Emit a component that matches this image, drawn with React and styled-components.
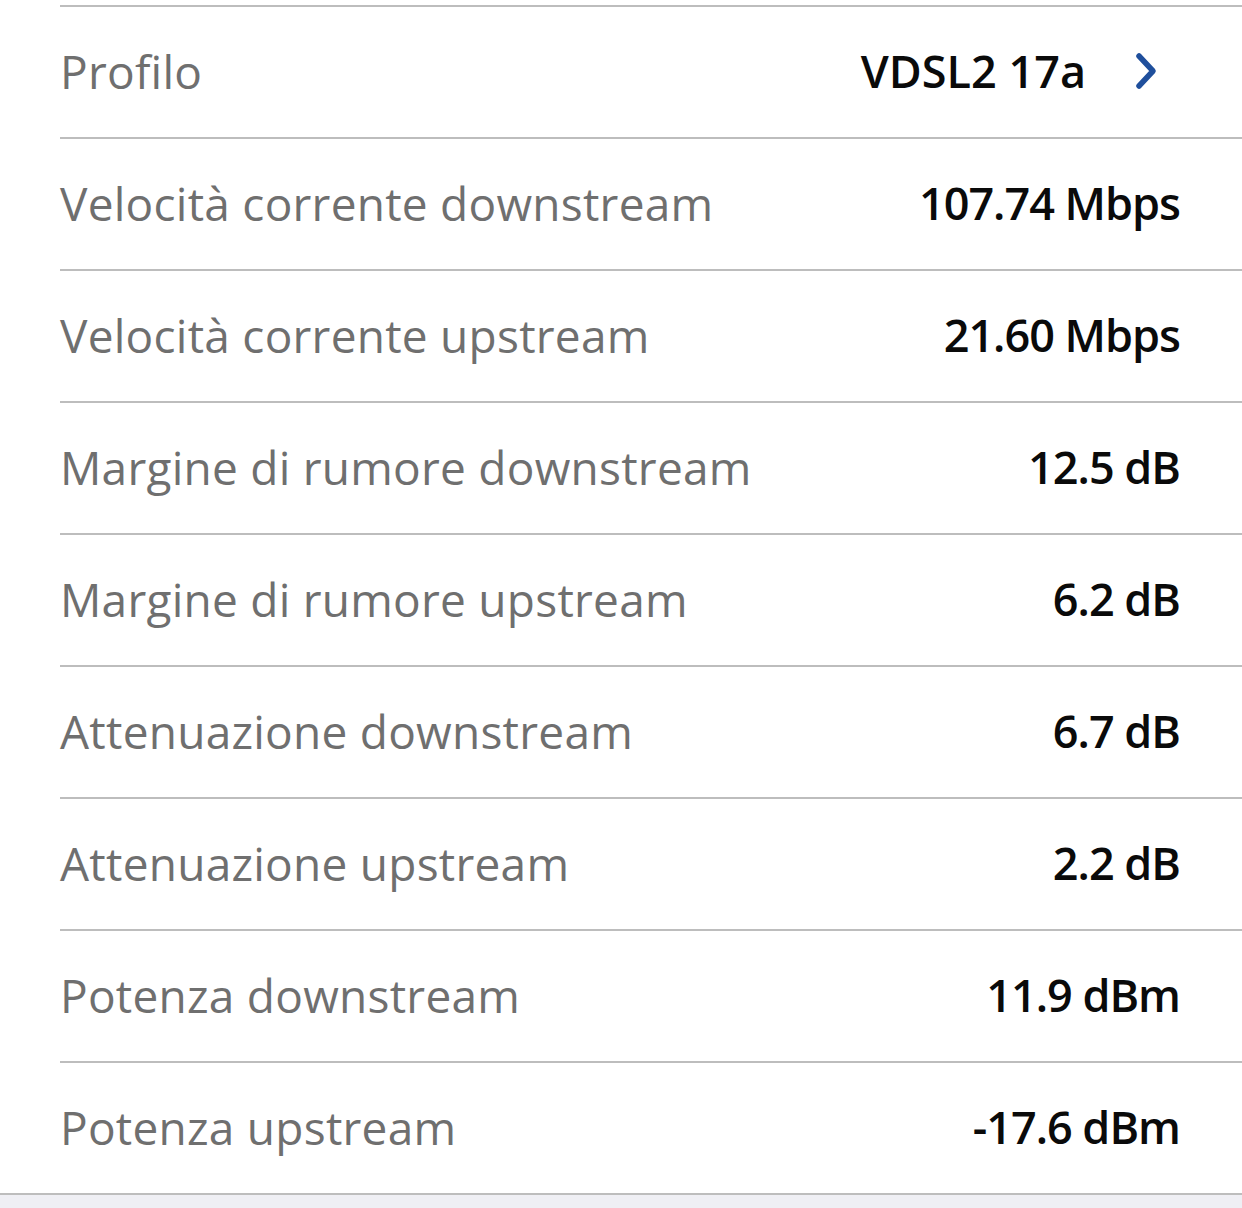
import React from "react";
import styled, { createGlobalStyle } from "styled-components";

const rows = [
  { label: "Velocità corrente downstream", value: "107.74 Mbps" },
  { label: "Velocità corrente upstream", value: "21.60 Mbps" },
  { label: "Margine di rumore downstream", value: "12.5 dB" },
  { label: "Margine di rumore upstream", value: "6.2 dB" },
  { label: "Attenuazione downstream", value: "6.7 dB" },
  { label: "Attenuazione upstream", value: "2.2 dB" },
  { label: "Potenza downstream", value: "11.9 dBm" },
  { label: "Potenza upstream", value: "-17.6 dBm" },
];

function App() {
  return (
    <>
      <GlobalStyle />
      <Page>
        <List>
          <Row>
            <Label>Profilo</Label>
            <ValueGroup>
              <Value $wide>VDSL2 17a</Value>
              <Chevron viewBox="0 0 24 40" aria-hidden="true">
                <path
                  d="M5 5 L19 20 L5 35"
                  fill="none"
                  stroke="#1f4f9c"
                  strokeWidth="5.5"
                  strokeLinecap="round"
                  strokeLinejoin="round"
                />
              </Chevron>
            </ValueGroup>
          </Row>
          {rows.map((r) => (
            <Row key={r.label}>
              <Label>{r.label}</Label>
              <Value>{r.value}</Value>
            </Row>
          ))}
        </List>
        <Footer />
      </Page>
    </>
  );
}

const GlobalStyle = createGlobalStyle`
  html, body {
    margin: 0;
    padding: 0;
    background: #ffffff;
  }
  body {
    font-family: "Open Sans", "Noto Sans", sans-serif;
  }
`;

const Page = styled.div`
  width: 1242px;
  height: 1208px;
  overflow: hidden;
  display: flex;
  flex-direction: column;
  background: #ffffff;
`;

const List = styled.div`
  padding-top: 5px;
  padding-left: 60px;
`;

const Row = styled.div`
  height: 132px;
  box-sizing: border-box;
  border-top: 2px solid #bdbdbd;
  display: flex;
  align-items: center;
  justify-content: space-between;
  padding-right: 62px;
  padding-bottom: 3px;
`;

const Label = styled.span`
  font-size: 46px;
  color: #6f6f6f;
  letter-spacing: 0.25px;
`;

const Value = styled.span`
  font-size: 45px;
  font-weight: 600;
  letter-spacing: ${(p) => (p.$wide ? "0" : "-1px")};
  color: #0a0a0a;
`;

const ValueGroup = styled.div`
  display: flex;
  align-items: center;
  gap: 48px;
  margin-right: 22px;
`;

const Chevron = styled.svg`
  width: 24px;
  height: 40px;
`;

const Footer = styled.div`
  flex: 1;
  border-top: 2px solid #bdbdbd;
  background: #efeff4;
`;

export default App;
